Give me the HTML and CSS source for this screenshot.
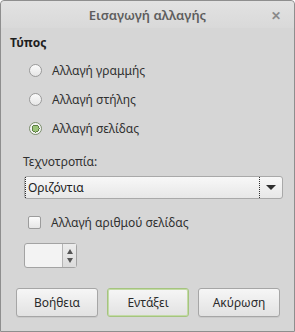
FILE: index.html
```html
<!DOCTYPE html>
<html lang="el">
<head>
    <meta charset="UTF-8">
    <title>Εισαγωγή αλλαγής</title>
    <link rel="stylesheet" href="styles.css">
</head>
<body>
    <div class="window">
        <div class="titlebar">
            <span class="title">Εισαγωγή αλλαγής</span>
            <span class="close">&#x2715;</span>
        </div>

        <div class="content">
            <div class="section-label">Τύπος</div>

            <div class="radios">
                <label class="radio-row"><span class="radio"></span>Αλλαγή γραμμής</label>
                <label class="radio-row"><span class="radio"></span>Αλλαγή στήλης</label>
                <label class="radio-row"><span class="radio checked"></span>Αλλαγή σελίδας</label>
            </div>

            <div class="style-label">Τεχνοτροπία:</div>
            <div class="combo">
                <span class="combo-text">Οριζόντια</span>
                <span class="combo-btn"><span class="arrow"></span></span>
            </div>

            <label class="check-row"><span class="checkbox"></span>Αλλαγή αριθμού σελίδας</label>

            <div class="spin">
                <span class="spin-entry"></span>
                <span class="spin-btns">
                    <span class="tri up"></span>
                    <span class="tri down"></span>
                </span>
            </div>
        </div>

        <div class="buttons">
            <button class="btn">Βοήθεια</button>
            <button class="btn default">Εντάξει</button>
            <button class="btn">Ακύρωση</button>
        </div>
    </div>
</body>
</html>
```

FILE: styles.css
```css
html, body {
    margin: 0;
    padding: 0;
}
body {
    font-family: "Noto Sans", "Open Sans", sans-serif;
    font-size: 12px;
    color: #303030;
}
.window {
    width: 295px;
    height: 332px;
    box-sizing: border-box;
    border: 1px solid #8e8e8e;
    border-radius: 4px 4px 0 0;
    background: #d6d6d6;
    display: flex;
    flex-direction: column;
}
.titlebar {
    height: 27px;
    display: flex;
    align-items: center;
    justify-content: center;
    position: relative;
    background: linear-gradient(#e2e2e2, #d9d9d9);
    border-radius: 4px 4px 0 0;
}
.title {
    font-size: 13px;
    font-weight: 600;
    color: #5e5e5e;
    padding-top: 1px;
}
.close {
    position: absolute;
    right: 13px;
    top: 6px;
    font-size: 12px;
    font-weight: bold;
    color: #8a8a8a;
}
.content {
    padding: 6px 0 0 9px;
    flex: 1;
}
.section-label {
    font-weight: bold;
    color: #1e1e1e;
    height: 18px;
}
.radios {
    display: flex;
    flex-direction: column;
    padding: 4px 0 0 19px;
}
.radio-row {
    display: flex;
    align-items: center;
    height: 29px;
}
.radio {
    width: 13px;
    height: 13px;
    box-sizing: border-box;
    border: 1px solid #9a9a9a;
    border-radius: 50%;
    background: linear-gradient(#fbfbfb, #e6e6e6);
    margin-right: 10px;
}
.radio.checked {
    border-color: #7c8f6c;
    background: radial-gradient(circle, #9cc47a 0 3px, #5e7f44 3px 4px, #f4f4f4 4px);
}
.style-label {
    padding: 10px 0 0 13px;
    height: 18px;
}
.combo {
    display: flex;
    margin: 5px 11px 0 14px;
    height: 23px;
    box-sizing: border-box;
    border: 1px solid #a9a9a9;
    border-radius: 3px;
    background: linear-gradient(#f8f8f8, #e7e7e7);
}
.combo-text {
    flex: 1;
    padding-left: 2px;
    line-height: 21px;
    color: #202020;
    border-left: 1px dotted #303030;
}
.combo-btn {
    width: 22px;
    border-left: 1px dotted #303030;
    display: flex;
    align-items: center;
    justify-content: center;
}
.arrow {
    width: 0;
    height: 0;
    border-left: 5px solid transparent;
    border-right: 5px solid transparent;
    border-top: 5px solid #2e2e2e;
}
.check-row {
    display: flex;
    align-items: center;
    margin: 13px 0 0 18px;
    height: 21px;
}
.checkbox {
    width: 13px;
    height: 13px;
    box-sizing: border-box;
    border: 1px solid #9c9c9c;
    border-radius: 2px;
    background: linear-gradient(#fbfbfb, #e6e6e6);
    margin-right: 10px;
}
.spin {
    display: flex;
    margin: 10px 0 0 14px;
    width: 53px;
    height: 25px;
    box-sizing: border-box;
    border: 1px solid #a3a3a3;
    border-radius: 3px;
    background: #f3f3f3;
}
.spin-entry {
    flex: 1;
}
.spin-btns {
    width: 13px;
    border-left: 1px solid #b5b5b5;
    background: linear-gradient(#ececec, #dcdcdc);
    display: flex;
    flex-direction: column;
    align-items: center;
    justify-content: center;
    gap: 4px;
}
.tri {
    width: 0;
    height: 0;
    border-left: 3px solid transparent;
    border-right: 3px solid transparent;
}
.tri.up {
    border-bottom: 5px solid #555;
}
.tri.down {
    border-top: 5px solid #555;
}
.buttons {
    display: flex;
    gap: 9px;
    padding: 0 14px 14px 15px;
}
.btn {
    flex: 1;
    height: 29px;
    font-family: inherit;
    font-size: 12px;
    color: #2a2a2a;
    border: 1px solid #a6a6a6;
    border-radius: 3px;
    background: linear-gradient(#f6f6f6, #e2e2e2);
    box-shadow: 0 1px 0 rgba(0, 0, 0, 0.06);
    padding: 0;
}
.btn.default {
    border-color: #a5c47f;
    box-shadow: inset 0 0 0 1px #c3dba5;
}
```
